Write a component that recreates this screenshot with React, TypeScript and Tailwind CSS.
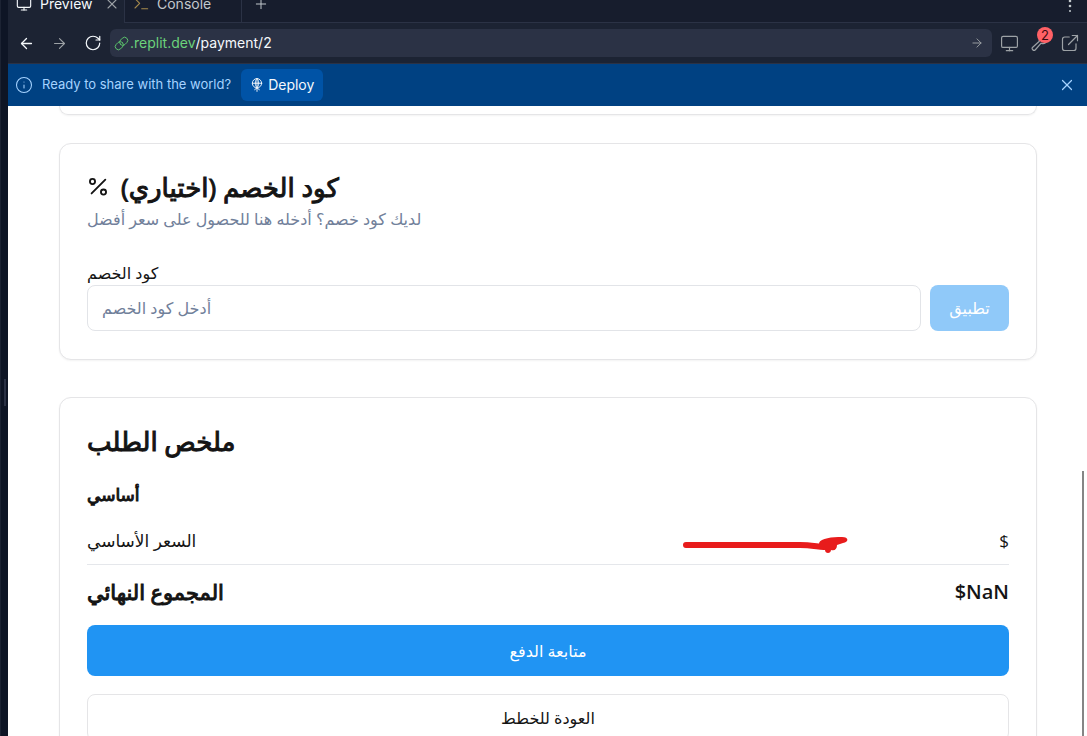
import type { ReactNode } from "react";
import { ArrowLeft, ArrowRight, Info, Monitor, Plus, RotateCw, X } from "lucide-react";

function Stroke({ className, children }: { className: string; children: ReactNode }) {
  return (
    <svg
      viewBox="0 0 24 24"
      fill="none"
      stroke="currentColor"
      strokeWidth="1.6"
      strokeLinecap="round"
      strokeLinejoin="round"
      className={className}
      aria-hidden="true"
    >
      {children}
    </svg>
  );
}

function TabBar() {
  return (
    <div className="flex h-[23px] shrink-0 items-end overflow-hidden bg-[#171d2d]">
      <div className="flex h-[38px] w-[116px] items-center bg-[#1c2333] pl-2">
        <button className="flex items-center gap-2 text-sm text-[#f5f9fc]">
          <Monitor className="size-4" strokeWidth={1.7} />
          Preview
        </button>
        <button aria-label="Close Preview" className="ml-auto mr-1 text-[#9da2a6]">
          <X className="size-4" strokeWidth={1.6} />
        </button>
      </div>
      <button className="flex h-[38px] w-[118px] items-center gap-2 border-x border-b border-[#2b3245] pl-2 text-sm text-[#c2c8cc]">
        <Stroke className="size-4 text-[#a68a4c]">
          <path d="M3 4l7 7-7 7M13 19h9" />
        </Stroke>
        Console
      </button>
      <div className="flex h-[38px] flex-1 items-center justify-between border-b border-[#2b3245] pl-[11px] pr-[9px] text-[#c2c8cc]">
        <button aria-label="New tab">
          <Plus className="size-4" strokeWidth={1.5} />
        </button>
        <button aria-label="More options">
          <svg viewBox="0 0 16 16" fill="currentColor" className="size-4">
            <circle cx="8" cy="5" r="1.3" />
            <circle cx="8" cy="10" r="1.3" />
            <circle cx="8" cy="15" r="1" />
          </svg>
        </button>
      </div>
    </div>
  );
}

function AddressBar() {
  return (
    <div className="flex h-[41px] shrink-0 items-center border-b border-[#2b3245] bg-[#1c2333] pl-[10px] pr-2 text-[#9da2a6]">
      <div className="flex w-[92px] items-center gap-4">
        <button aria-label="Back" className="text-[#f5f9fc]">
          <ArrowLeft className="size-[17px]" strokeWidth={1.8} />
        </button>
        <button aria-label="Forward">
          <ArrowRight className="size-[17px]" strokeWidth={1.6} />
        </button>
        <button aria-label="Reload" className="text-[#f5f9fc]">
          <RotateCw className="size-[18px]" strokeWidth={1.6} />
        </button>
      </div>
      <div className="flex h-7 min-w-0 flex-1 items-center rounded-md bg-[#2b3245] pl-1 pr-2 text-sm">
        <Stroke className="mr-px size-[15px] shrink-0 text-[#5cc46c]">
          <path d="M10 13a5 5 0 0 0 7.54.54l3-3a5 5 0 0 0-7.07-7.07l-3 3a5 5 0 0 0-.5 6.5" />
          <path d="M14 11a5 5 0 0 0-7.54-.54l-3 3a5 5 0 0 0 7.07 7.07l3-3a5 5 0 0 0 .5-6.5" />
        </Stroke>
        <span className="text-[#6bd37b]">.replit.dev</span>
        <input
          aria-label="Page path"
          defaultValue="/payment/2"
          className="min-w-0 flex-1 bg-transparent text-[#f5f9fc] outline-none"
        />
        <button aria-label="Go">
          <ArrowRight className="size-[14px]" strokeWidth={1.6} />
        </button>
      </div>
      <div className="ml-2 flex items-center gap-3">
        <button aria-label="Device size">
          <Monitor className="size-[19px]" strokeWidth={1.5} />
        </button>
        <button aria-label="Developer tools, 2 messages" className="relative">
          <Stroke className="size-[18px]">
            <path d="M22 6.5a6 6 0 0 1-8.5 5.8L5.8 21a2.4 2.4 0 0 1-3.5-3.4l8.8-7.9A6 6 0 0 1 17 2l-3 4 3.5 3.5Z" />
          </Stroke>
          <span className="absolute -top-[7px] left-[6px] flex size-4 items-center justify-center rounded-full bg-[#ff6166] text-[13px] leading-4 text-[#3c0b10]">
            2
          </span>
        </button>
        <button aria-label="Open in new tab">
          <Stroke className="size-[18px]">
            <path d="M11 4H5a3 3 0 0 0-3 3v12a3 3 0 0 0 3 3h12a3 3 0 0 0 3-3v-6M15 2h7v7M22 2L10 14" />
          </Stroke>
        </button>
      </div>
    </div>
  );
}

function DeployBanner() {
  return (
    <div className="flex h-[42px] shrink-0 items-center bg-[#004182] pl-[7px] pr-[11px] text-[13px] text-[#a6d3ff]">
      <Info className="mr-[9px] size-[18px]" strokeWidth={1.4} />
      <span>Ready to share with the world?</span>
      <button className="ml-[10px] flex h-8 items-center gap-1 rounded-md bg-[#0053a6] px-[9px] text-[#f5f9fc]">
        <Stroke className="size-[14px]">
          <circle cx="12" cy="9" r="8" />
          <path d="M4 9h16M12 1v22M12 1c-4 3-4 12 0 16M12 1c4 3 4 12 0 16M8 20l4-3 4 3" />
        </Stroke>
        <span className="text-sm">Deploy</span>
      </button>
      <button aria-label="Dismiss" className="ml-auto">
        <X className="size-[18px]" strokeWidth={1.6} />
      </button>
    </div>
  );
}

function Card({ children }: { children: ReactNode }) {
  return (
    <section className="rounded-xl border border-[#e5e5e7] bg-white px-[27px] pb-7 pt-[25px] shadow-xs">
      {children}
    </section>
  );
}

function DiscountCard() {
  return (
    <Card>
      <h2 className="flex items-center gap-3 text-[26px] leading-9">
        <Stroke className="size-[22px]">
          <path d="M20 4L5 19" strokeWidth="2" />
          <circle cx="6" cy="6" r="2.8" strokeWidth="2" />
          <circle cx="18" cy="17.5" r="2.8" strokeWidth="2" />
        </Stroke>
        <span dir="rtl" className="[-webkit-text-stroke:1px]">
          كود الخصم (اختياري)
        </span>
      </h2>
      <p className="text-base leading-7 text-[#71809a]">
        <span dir="rtl">لديك كود خصم؟ أدخله هنا للحصول على سعر أفضل</span>
      </p>
      <label htmlFor="discount" className="mt-7 block text-base leading-6">
        كود الخصم
      </label>
      <div className="flex gap-[9px]">
        <input
          id="discount"
          placeholder="أدخل كود الخصم"
          className="h-[46px] min-w-0 flex-1 rounded-lg border border-[#e2e4e8] bg-white px-[14px] text-base outline-none placeholder:text-[#71809a]"
        />
        <button disabled className="h-[46px] w-[79px] rounded-lg bg-[#90c9f9] text-base text-white">
          تطبيق
        </button>
      </div>
    </Card>
  );
}

function SummaryCard() {
  return (
    <Card>
      <h2 className="text-[26px] leading-9 [-webkit-text-stroke:1px]">ملخص الطلب</h2>
      <h3 className="mt-[22px] text-[17px] leading-7 [-webkit-text-stroke:1px]">أساسي</h3>
      <div className="mt-[18px] flex h-[38px] items-start justify-between border-b border-[#e5e7eb] text-[17px] leading-7">
        <span>السعر الأساسي</span>
        <svg viewBox="0 0 166 18" fill="none" className="ml-auto mr-[151px] mt-2 h-[18px] w-[166px]" aria-hidden="true">
          <path d="M4 10H118C127 10 132 11 142 12" stroke="#e81c1c" strokeWidth="6" strokeLinecap="round" />
          <path
            d="M137 8C139 3 150 2 160 2C167 2 167 7 161 8L155 10C155 14 153 16 149 15C149 19 143 19 143 15L138 13Z"
            fill="#e81c1c"
          />
        </svg>
        <span>$</span>
      </div>
      <div className="mt-[13px] flex justify-between leading-7">
        <span className="text-[21px] [-webkit-text-stroke:1px]">المجموع النهائي</span>
        <span className="text-xl font-semibold leading-7">$NaN</span>
      </div>
      <button className="mt-[19px] block h-[51px] w-full rounded-lg bg-[#2094f3] text-base text-white">
        متابعة الدفع
      </button>
      <button className="mt-[18px] block h-[47px] w-full rounded-lg border border-[#e5e5e7] bg-white text-base">
        العودة للخطط
      </button>
    </Card>
  );
}

export default function App() {
  return (
    <div className="flex h-screen overflow-hidden bg-[#0e1525] font-['Inter',sans-serif]">
      <div className="flex w-2 shrink-0 items-center border-l border-[#1c2333] pl-[3px] pt-12">
        <div className="h-[27px] w-[2px] bg-[#2b3245]" />
      </div>
      <div className="relative flex min-w-0 flex-1 flex-col">
        <TabBar />
        <AddressBar />
        <DeployBanner />
        <main className="min-h-0 flex-1 overflow-hidden bg-white pl-[51px] pr-[50px] font-['Open_Sans','Noto_Sans','DejaVu_Sans',sans-serif] text-[#141414]">
          <div className="h-[9px] rounded-b-xl border border-t-0 border-[#e5e5e7] shadow-xs" />
          <div className="mt-7 flex flex-col gap-[37px]">
            <DiscountCard />
            <SummaryCard />
          </div>
        </main>
        <div className="absolute bottom-0 right-[3px] h-[265px] w-[2px] bg-[#858585]" />
      </div>
    </div>
  );
}
